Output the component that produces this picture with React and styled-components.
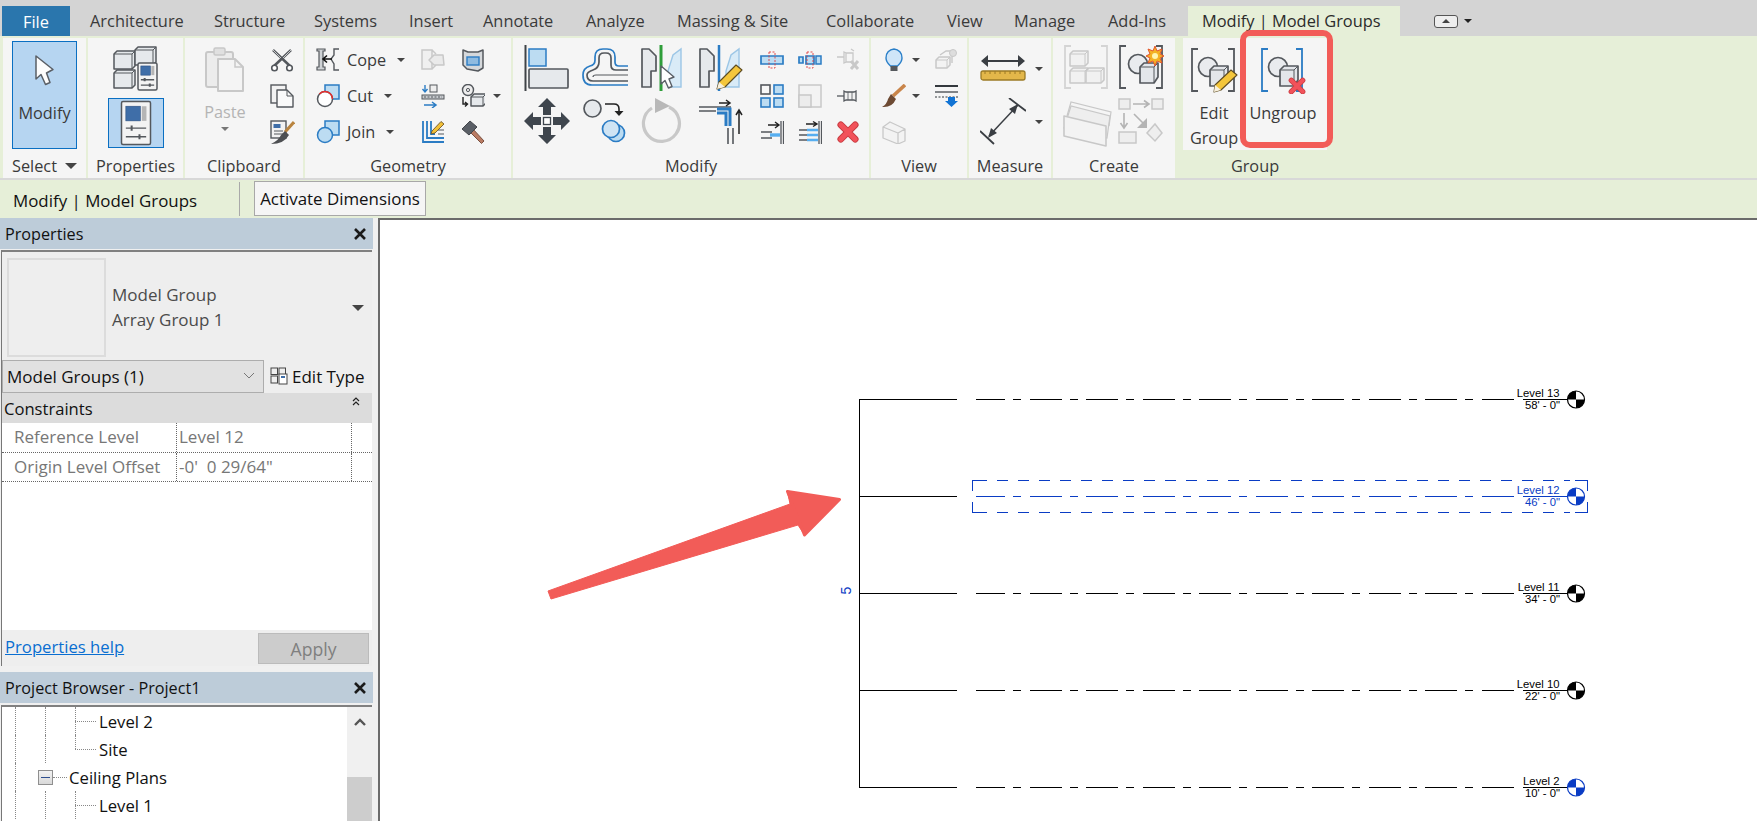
import React from 'react';
import styled, { createGlobalStyle } from 'styled-components';

const GlobalStyle = createGlobalStyle`
  html, body { margin: 0; padding: 0; background: #fff; overflow: hidden; }
  body { font-family: "Open Sans", "Noto Sans", "Liberation Sans", sans-serif; }
`;

const DARK = '#54585d';
const FILL = '#e6e9ec';
const BLUE = '#2b7cc4';
const SKY = '#bcdcf2';
const GRAY = '#c8c8c8';
const RED = '#f25c58';
const CAD = '#0a3cc4';

const Root = styled.div`
  position: relative;
  width: 1757px;
  height: 821px;
  overflow: hidden;
  font-size: 16.3px;
  color: #3a3a3a;
`;

/* tabs */
const TabBar = styled.div`
  display: flex;
  align-items: flex-end;
  height: 36px;
  padding-left: 2px;
  background: #d4d4d4;
`;
const FileTab = styled.div`
  width: 68px;
  height: 30px;
  background: #2a76ad;
  color: #fff;
  display: flex;
  align-items: center;
  justify-content: center;
  font-size: 16.4px;
`;
const Tab = styled.div`
  width: ${p => p.$w}px;
  height: 30px;
  padding-left: 20px;
  box-sizing: border-box;
  line-height: 30px;
  white-space: nowrap;
  font-size: 16.4px;
`;
const ContextTab = styled(Tab)`
  padding-left: 14px;
  background: #e6efd8;
  color: #2b2b2b;
`;
const ToggleBox = styled.div`
  display: flex;
  align-items: center;
  gap: 6px;
  height: 30px;
  margin-left: 34px;
`;
const ToggleIcon = styled.div`
  width: 22px;
  height: 11px;
  border: 1.5px solid #555;
  border-radius: 3px;
  background: #eee;
  display: flex;
  align-items: center;
  justify-content: center;
`;

/* ribbon */
const Caret = styled.span`
  display: inline-block;
  width: 0;
  height: 0;
  border-left: ${p => p.$s || 4}px solid transparent;
  border-right: ${p => p.$s || 4}px solid transparent;
  border-top: ${p => p.$s || 4}px solid ${p => p.$color || '#444'};
  margin-left: ${p => p.$ml ?? 0}px;
  margin-right: ${p => p.$mr ?? 0}px;
  flex: none;
`;
const UpCaret = styled(Caret)`
  transform: rotate(180deg);
`;
const Ribbon = styled.div`
  display: flex;
  gap: 2px;
  height: 144px;
  padding: 2px 0 0 3px;
  box-sizing: border-box;
  background: #e6efd8;
  position: relative;
  border-bottom: 2px solid #d8d8d8;
`;
const Panel = styled.div`
  width: ${p => p.$w}px;
  margin-left: ${p => p.$ml || 0}px;
  height: 140px;
  background: ${p => (p.$context ? 'transparent' : '#f5f5f5')};
  display: flex;
  flex-direction: column;
`;
const PanelBody = styled.div`
  height: 112px;
  box-sizing: border-box;
  display: flex;
  align-items: flex-start;
  padding: ${p => p.$pad || '0 0 0 11px'};
  background: ${p => (p.$light ? '#f5f5f5' : 'transparent')};
`;
const PanelLabel = styled.div`
  height: 28px;
  padding-top: 4px;
  box-sizing: border-box;
  line-height: 28px;
  text-align: center;
  white-space: nowrap;
  display: flex;
  justify-content: center;
  align-items: center;
  gap: 8px;
`;
const ModifyButton = styled.div`
  width: 65px;
  height: 108px;
  box-sizing: border-box;
  background: #b6d5f1;
  border: 1.5px solid #0a6fc2;
  display: flex;
  flex-direction: column;
  align-items: center;
  padding-top: 13px;
  margin-top: 3px;
`;
const ButtonText = styled.div`
  margin-top: 17px;
  line-height: 20px;
`;
const CenterColumn = styled.div`
  display: flex;
  flex-direction: column;
  align-items: center;
  width: 100%;
  padding-top: 8px;
`;
const ToggleButton = styled.div`
  width: 56px;
  height: 50px;
  margin-top: 7px;
  box-sizing: border-box;
  background: #b6d5f1;
  border: 1px solid #0a6fc2;
  display: flex;
  align-items: center;
  justify-content: center;
`;
const PasteTool = styled.div`
  width: 80px;
  display: flex;
  flex-direction: column;
  align-items: center;
  padding-top: 9px;
  color: #b4b4b4;
`;
const PasteText = styled.div`
  margin-top: 7px;
  margin-bottom: 3px;
  line-height: 24px;
`;
const SmallCol = styled.div`
  display: flex;
  flex-direction: column;
  gap: 12px;
  padding-top: 10px;
  margin-left: ${p => p.$ml || 0}px;
  width: ${p => (p.$w ? `${p.$w}px` : 'auto')};
`;
const IconRow = styled.div`
  display: flex;
  align-items: center;
  height: 24px;
`;
const RowText = styled.span`
  margin-left: 7px;
  line-height: 24px;
`;
const SmallGrid = styled.div`
  display: grid;
  grid-template-columns: repeat(3, 24px);
  grid-auto-rows: 24px;
  column-gap: 14px;
  row-gap: 12px;
  padding-top: 10px;
  margin-left: ${p => p.$ml || 0}px;
`;
const BigGrid = styled.div`
  display: grid;
  grid-template-columns: repeat(${p => p.$cols}, ${p => p.$size}px);
  grid-auto-rows: 47px;
  column-gap: ${p => p.$gap}px;
  row-gap: 6px;
  padding-top: 7px;
`;
const MeasureCol = styled.div`
  display: flex;
  flex-direction: column;
  gap: 6px;
  padding-top: 7px;
`;
const MeasureRow = styled.div`
  display: flex;
  align-items: center;
  height: 47px;
`;
const GroupTool = styled.div`
  width: ${p => p.$w}px;
  margin-left: ${p => p.$ml || 0}px;
  display: flex;
  flex-direction: column;
  align-items: center;
  text-align: center;
  padding-top: 10px;
`;
const GroupText = styled.div`
  margin-top: 7px;
  line-height: 25px;
`;
const Highlight = styled.div`
  position: absolute;
  left: 1240px;
  top: 30px;
  width: 93px;
  height: 118px;
  box-sizing: border-box;
  border: 6px solid ${RED};
  border-radius: 10px;
`;

/* options bar */
const OptionsBar = styled.div`
  display: flex;
  align-items: center;
  height: 38px;
  background: #e6efd8;
  color: #111;
  font-size: 16.9px;
`;
const OptionsTitle = styled.div`
  width: 240px;
  padding-left: 13px;
  box-sizing: border-box;
  border-right: 1px solid #a9a9a9;
  height: 34px;
  line-height: 38px;
  white-space: nowrap;
`;
const OptionsButton = styled.div`
  height: 35px;
  width: 172px;
  margin-left: 14px;
  margin-top: -1px;
  box-sizing: border-box;
  background: #f5f5f5;
  border: 1px solid #a8a8a8;
  text-align: center;
  line-height: 33px;
  white-space: nowrap;
`;

/* main area */
const Main = styled.div`
  display: flex;
  height: 603px;
`;
const LeftColumn = styled.div`
  width: 373px;
  flex: none;
  display: flex;
  flex-direction: column;
  background: #f0f0f0;
  color: #111;
  font-size: 17px;
`;
const Gutter = styled.div`
  width: 5px;
  flex: none;
  background: #f0f0f0;
`;
const PaneHeader = styled.div`
  height: 31px;
  flex: none;
  background: #bdccd9;
  display: flex;
  align-items: center;
  justify-content: space-between;
  padding: 0 6px 0 5px;
  font-size: 16.2px;
`;
const PropsBody = styled.div`
  height: 416px;
  margin: 1px 1px 0 1px;
  flex: none;
  box-sizing: border-box;
  border-left: 1px solid #777;
  border-top: 2px solid #808080;
  background: #fff;
  display: flex;
  flex-direction: column;
`;
const TypeSelector = styled.div`
  height: 107px;
  flex: none;
  box-sizing: border-box;
  background: #eee;
  padding: 6px 5px 2px 5px;
  display: flex;
  align-items: center;
  color: #4b4b4b;
`;
const Thumb = styled.div`
  width: 99px;
  height: 99px;
  box-sizing: border-box;
  border: 2px solid #dcdcdc;
  flex: none;
`;
const TypeName = styled.div`
  margin-left: 6px;
  flex: 1;
  line-height: 24.5px;
`;
const SelectRow = styled.div`
  display: flex;
  align-items: center;
  height: 34px;
  flex: none;
  background: #eee;
`;
const FakeSelect = styled.div`
  width: 262px;
  height: 33px;
  box-sizing: border-box;
  background: #e1e1e1;
  border: 1px solid #adadad;
  display: flex;
  align-items: center;
  justify-content: space-between;
  padding: 0 8px 0 4px;
`;
const EditType = styled.div`
  display: flex;
  align-items: center;
  gap: 4px;
  margin-left: 6px;
  white-space: nowrap;
`;
const SectionHead = styled.div`
  height: 30px;
  flex: none;
  background: #dcdcdc;
  display: flex;
  justify-content: space-between;
  padding: 0 12px 0 2px;
  line-height: 32px;
  font-size: 16.6px;
`;
const PropRow = styled.div`
  height: 29.5px;
  flex: none;
  box-sizing: border-box;
  display: grid;
  grid-template-columns: 175px 175px 1fr;
  border-bottom: 1px dotted #666;
  color: #777;
  line-height: 28px;
`;
const PropCell = styled.div`
  padding-left: ${p => p.$pl}px;
  border-right: 1px dotted #666;
  white-space: pre;
`;
const PropsFill = styled.div`
  flex: 1;
`;
const PropsFooter = styled.div`
  height: 36px;
  flex: none;
  background: #eee;
  display: flex;
  align-items: center;
  justify-content: space-between;
  padding: 0 3px 0 3px;
`;
const HelpLink = styled.a`
  color: #0a6ed1;
  text-decoration: underline;
  font-size: 16.7px;
  margin-top: -3px;
`;
const ApplyButton = styled.div`
  width: 111px;
  height: 31px;
  box-sizing: border-box;
  background: #cccccc;
  border: 1px solid #bbb;
  color: #7f7f7f;
  text-align: center;
  line-height: 31px;
  font-size: 17.6px;
`;
const Spacer = styled.div`
  height: 6px;
  flex: none;
`;
const BrowserBody = styled.div`
  flex: 1;
  margin: 2px 1px 0 1px;
  border-left: 1px solid #777;
  border-top: 2px solid #808080;
  background: #fff;
  display: flex;
  overflow: hidden;
`;
const TreeList = styled.div`
  flex: 1;
  padding-left: 13px;
  font-size: 16.7px;
`;
const TreeRow = styled.div`
  display: flex;
  height: 28px;
  align-items: center;
`;
const Guide = styled.span`
  align-self: stretch;
  width: 30px;
  flex: none;
  box-sizing: border-box;
  border-left: 1px dotted #888;
`;
const Branch = styled.span`
  align-self: stretch;
  width: 21px;
  flex: none;
  position: relative;
  margin-right: 3px;
  &::before {
    content: '';
    position: absolute;
    left: 0;
    top: 0;
    height: ${p => (p.$last ? '50%' : '100%')};
    border-left: 1px dotted #888;
  }
  &::after {
    content: '';
    position: absolute;
    left: 0;
    right: 0;
    top: 50%;
    border-top: 1px dotted #888;
  }
`;
const Expander = styled.span`
  width: 15px;
  height: 15px;
  box-sizing: border-box;
  flex: none;
  margin-left: -7px;
  position: relative;
  background: linear-gradient(#f2f2f2, #d9d9d9);
  border: 1px solid #8f8f8f;
  display: flex;
  align-items: center;
  justify-content: center;
  &::after {
    content: '';
    width: 9px;
    border-top: 1px solid #2f4f8f;
  }
  &::before {
    content: '';
    position: absolute;
    left: 6px;
    top: -7px;
    bottom: -7px;
    z-index: -1;
    border-left: 1px dotted #888;
  }
`;
const Dash = styled.span`
  width: 14px;
  border-top: 1px dotted #888;
  margin-right: 2px;
`;
const ScrollBar = styled.div`
  width: 25px;
  flex: none;
  background: #f0f0f0;
  display: flex;
  flex-direction: column;
  align-items: center;
`;
const ScrollUp = styled.div`
  height: 70px;
  padding-top: 10px;
  box-sizing: border-box;
`;
const ScrollThumb = styled.div`
  flex: 1;
  width: 100%;
  background: #cdcdcd;
`;
const Canvas = styled.div`
  flex: 1;
  box-sizing: border-box;
  background: #fff;
  border-top: 2px solid #6b6b6b;
  border-left: 2px solid #6b6b6b;
  overflow: hidden;
`;

/* icons */
const Ic = ({ w = 24, h = 24, children }) => (
  <svg width={w} height={h} viewBox={`0 0 ${w} ${h}`} fill="none" style={{ display: 'block', flex: 'none' }}>
    {children}
  </svg>
);

const RedX = ({ x, y, s = 1 }) => (
  <>
    <path
      d={`M${x - 6 * s} ${y - 6 * s} L${x + 6 * s} ${y + 6 * s} M${x + 6 * s} ${y - 6 * s} L${x - 6 * s} ${y + 6 * s}`}
      stroke="#c73b40"
      strokeWidth={5.6 * s}
      strokeLinecap="round"
    />
    <path
      d={`M${x - 6 * s} ${y - 6 * s} L${x + 6 * s} ${y + 6 * s} M${x + 6 * s} ${y - 6 * s} L${x - 6 * s} ${y + 6 * s}`}
      stroke="#f2525a"
      strokeWidth={4 * s}
      strokeLinecap="round"
    />
  </>
);
const Cube = ({ x, y, s = 16, c = DARK, f = FILL }) => (
  <g>
    <path d={`M${x + 3} ${y} H${x + s + 3} V${y + s - 3} L${x + s} ${y + s} H${x} V${y + 3} Z`} fill={f} stroke={c} strokeWidth="1.5" strokeLinejoin="round" />
    <path d={`M${x} ${y + 3} H${x + s} V${y + s} M${x + s} ${y + 3} L${x + s + 3} ${y}`} stroke={c} strokeWidth="1" />
  </g>
);
const Sheet = ({ x, y, w, h }) => (
  <g>
    <rect x={x} y={y} width={w} height={h} rx="1.5" fill="#f3f3f3" stroke={DARK} strokeWidth="1.5" />
    <rect x={x + w * 0.15} y={y + h * 0.11} width={w * 0.5} height={h * 0.34} fill="#3f6ea8" stroke="#2b4f80" strokeWidth=".6" />
    <rect x={x + w * 0.7} y={y + h * 0.11} width={w * 0.16} height={h * 0.34} fill="#b5b5b5" />
    <path d={`M${x + w * 0.15} ${y + h * 0.62} H${x + w * 0.85} M${x + w * 0.15} ${y + h * 0.82} H${x + w * 0.85}`} stroke={DARK} strokeWidth="1.3" />
    <path d={`M${x + w * 0.35} ${y + h * 0.56} V${y + h * 0.68} M${x + w * 0.62} ${y + h * 0.76} V${y + h * 0.88}`} stroke={DARK} strokeWidth="2" />
  </g>
);

const CursorIcon = () => (
  <Ic w={19} h={31}>
    <path d="M1 1 V24 L6 19.5 L10.5 29.5 L15 27.5 L11.5 18 L18 14.5 Z" fill="#fdfdfd" stroke="#5a5f66" strokeWidth="1.5" strokeLinejoin="round" />
  </Ic>
);
const TypeProps = () => (
  <Ic w={46} h={45}>
    <Cube x={1} y={5} s={18} />
    <Cube x={22} y={1} s={18} />
    <Cube x={1} y={24} s={18} />
    <Sheet x={25} y={17} w={19} h={27} />
  </Ic>
);
const SheetIcon = () => (
  <Ic w={32} h={46}>
    <Sheet x={1.5} y={1.5} w={29} h={43} />
  </Ic>
);
const PasteIcon = () => (
  <Ic w={40} h={46}>
    <rect x="1" y="5" width="27" height="35" rx="2" fill="#ececec" stroke={GRAY} strokeWidth="2" />
    <rect x="9" y="1" width="11" height="7" rx="1.5" fill="#e0e0e0" stroke={GRAY} strokeWidth="1.5" />
    <path d="M13 12 H30 L38 20 V44 H13 Z" fill="#f4f4f4" stroke={GRAY} strokeWidth="2" strokeLinejoin="round" />
    <path d="M30 12 V20 H38" stroke={GRAY} strokeWidth="1.5" />
  </Ic>
);
const Scissors = () => (
  <Ic>
    <path d="M3 2 L20 18 M21 2 L4 18" stroke={DARK} strokeWidth="2.5" />
    <path d="M3 2 L11 10 M21 2 L13 10" stroke="#e8e8e8" strokeWidth=".8" />
    <circle cx="4.5" cy="20" r="2.8" fill="#fff" stroke={DARK} strokeWidth="1.6" />
    <circle cx="19.5" cy="20" r="2.8" fill="#fff" stroke={DARK} strokeWidth="1.6" />
  </Ic>
);
const CopyPages = () => (
  <Ic>
    <rect x="1" y="1" width="15" height="18" fill="#f2f2f2" stroke={DARK} strokeWidth="1.4" />
    <path d="M7 6 H17 L23 12 V23 H7 Z" fill="#fafafa" stroke={DARK} strokeWidth="1.4" strokeLinejoin="round" />
    <path d="M17 6 V12 H23" stroke={DARK} />
  </Ic>
);
const MatchProps = () => (
  <Ic w={25} h={25}>
    <rect x="1" y="1" width="15" height="17" fill="#f2f2f2" stroke={DARK} strokeWidth="1.4" />
    <rect x="3.5" y="4" width="7" height="4" fill="#3f6ea8" />
    <path d="M4 11 H13 M4 14 H13" stroke={DARK} />
    <path d="M24 2 L15 12" stroke="#b9843f" strokeWidth="3" />
    <path d="M15 11 L19 15 Q14 24 1 24 Q9 20 11 15 Z" fill="#4d4f52" />
  </Ic>
);
const CopeIcon = () => (
  <Ic>
    <path d="M1 1 H9 V3 H7 V19 H9 V22 H1 V19 H3 V3 H1 Z" fill="#cfd2d5" stroke={DARK} strokeWidth="1.2" />
    <path d="M23 1 H18 V7 L15 11 L18 16 V22 H23" stroke={DARK} strokeWidth="1.4" />
    <path d="M16 11 H7 M11 7.5 L7 11 L11 14.5" stroke="#111" strokeWidth="1.6" />
  </Ic>
);
const CutIcon = () => (
  <Ic>
    <rect x="9" y="1" width="14" height="14" fill={SKY} stroke={BLUE} strokeWidth="1.5" />
    <circle cx="9" cy="15" r="7.5" fill="#fff" stroke={DARK} strokeWidth="1.5" />
    <path d="M3.5 10 A7.5 7.5 0 0 1 16.5 15" stroke="#ef2b2b" strokeWidth="1.4" />
  </Ic>
);
const JoinIcon = () => (
  <Ic>
    <rect x="9" y="1" width="14" height="14" fill={SKY} stroke={BLUE} strokeWidth="1.5" />
    <circle cx="9" cy="15" r="7.5" fill={SKY} stroke={BLUE} strokeWidth="1.5" />
  </Ic>
);
const UnjoinIcon = () => (
  <Ic>
    <path d="M1 2 H11 V21 H1 Z M11 2 L15 6 M11 21 L15 17" fill="#f0f0f0" stroke={GRAY} strokeWidth="1.5" />
    <path d="M22 7 H13 L8 12 L13 17 H23 Z" fill="#eaeaea" stroke={GRAY} strokeWidth="1.5" strokeLinejoin="round" />
  </Ic>
);
const WallShield = () => (
  <Ic>
    <path d="M2 2 L7 4 L17 4 L22 2 V20 L17 23 L6 21 L2 17 Z" fill="#d5d8db" stroke={DARK} strokeWidth="1.5" strokeLinejoin="round" />
    <rect x="6" y="9" width="12" height="8" fill="#8fbbe0" stroke={BLUE} strokeWidth="1.4" />
  </Ic>
);
const SplitIcon = () => (
  <Ic>
    <path d="M4 1 V7 M1.5 5 L4 8 L6.5 5" stroke={BLUE} strokeWidth="1.4" />
    <rect x="9" y="1" width="7" height="7" fill="#eee" stroke={DARK} />
    <rect x="1" y="11" width="22" height="4" fill="#c9ccd0" stroke={DARK} />
    <path d="M3 13 H21" stroke={DARK} strokeDasharray="2 1.5" />
    <path d="M3 21 H14 M11 18 L15 21 L11 24" stroke={BLUE} strokeWidth="1.5" />
  </Ic>
);
const CircleCube = () => (
  <Ic>
    <circle cx="7" cy="6" r="5.5" fill="#eee" stroke={DARK} strokeWidth="1.4" />
    <circle cx="7" cy="6" r="1.6" stroke={DARK} />
    <path d="M2 13 V20 H6 M4 18 L6.5 20 L4 22.5" stroke="#222" strokeWidth="1.4" />
    <Cube x={10} y={10} s={12} />
  </Ic>
);
const WallPencil = () => (
  <Ic>
    <path d="M2 1 V22 H23 M6 1 V18 H23 M10 1 V14 H14" stroke={BLUE} strokeWidth="1.8" />
    <path d="M17 10 H23 M17 14 H23" stroke={DARK} strokeWidth="1.2" />
    <path d="M11 11 L20 1.5 L23 4 L14 13 L10 14 Z" fill="#f2c037" stroke="#70582a" strokeWidth=".9" />
  </Ic>
);
const Hammer = () => (
  <Ic>
    <path d="M11 8 L23 21 L20.5 23.5 L8 11" fill="#b97b63" stroke="#7a5040" />
    <path d="M1 9 L9 1 L16 7 L8 15 Z" fill="#5a5f66" stroke="#43464b" strokeLinejoin="round" />
  </Ic>
);

const AlignIcon = () => (
  <Ic w={46} h={47}>
    <path d="M1.5 0 V46" stroke="#3f4347" strokeWidth="2" />
    <rect x="5" y="4" width="17" height="17" fill={SKY} stroke={BLUE} strokeWidth="1.5" />
    <rect x="5" y="24" width="39" height="19" rx="1" fill={FILL} stroke={DARK} strokeWidth="1.7" />
  </Ic>
);
const OffsetIcon = () => (
  <Ic w={46} h={47}>
    <path d="M46 21 H37 Q33 21 33 17 V12 Q33 4 25 4 H21 Q13 4 13 12 V15 Q13 20 8 21 Q1 23 1 30 Q1 40 10 40 H46" stroke={BLUE} strokeWidth="1.7" />
    <path d="M46 25 H34 Q29 25 29 20 V13 Q29 8 24 8 H22 Q17 8 17 13 V17 Q17 23 11 25 Q5 27 5 30 Q5 36 11 36 H46" stroke={DARK} strokeWidth="1.7" />
    <path d="M46 30 H14 Q11 30 11 32" stroke={DARK} strokeWidth="1.2" />
  </Ic>
);
const DoorPair = ({ line, lineW = 2.5 }) => (
  <>
    <path d="M2 4 H9 L16 11 V26 H11 V42 H2 Z" fill={FILL} stroke={DARK} strokeWidth="1.7" strokeLinejoin="round" />
    <path d="M41 4 V42 H28 V26 L33 10 Z" fill="#d9ebf7" stroke="#9cc6e6" strokeWidth="1.4" />
    <path d="M21 0 V46" stroke={line} strokeWidth={lineW} />
  </>
);
const MirrorPick = () => (
  <Ic w={46} h={47}>
    <DoorPair line="#2f9e3a" lineW={3} />
    <path d="M21 21 V39 L25 35.5 L28.5 43 L32 41.5 L29 34 L34 32 Z" fill="#fff" stroke="#5a5f66" strokeWidth="1.4" strokeLinejoin="round" />
  </Ic>
);
const MirrorDraw = () => (
  <Ic w={46} h={47}>
    <DoorPair line={BLUE} />
    <path d="M19 44 L21 37 L38 20 L44 25 L27 42 Z" fill="#f4c63b" stroke="#5d4b22" strokeWidth="1.1" strokeLinejoin="round" />
    <path d="M19 44 L21 37 L27 42 Z" fill="#f7f0de" />
  </Ic>
);
const MoveIcon = () => (
  <Ic w={46} h={47}>
    <path d="M23 0 L32 9 H27 V17 H19 V9 H14 Z M23 46 L32 37 H27 V29 H19 V37 H14 Z M0 23 L9 14 V19 H17 V27 H9 V32 Z M46 23 L37 14 V19 H29 V27 H37 V32 Z" fill="#3f464e" strokeLinejoin="round" />
    <rect x="19.5" y="19.5" width="7" height="7" fill="#fff" stroke="#3f464e" strokeWidth="1.3" />
  </Ic>
);
const CopyIcon = () => (
  <Ic w={46} h={47}>
    <circle cx="10.5" cy="10.5" r="8.5" fill={FILL} stroke={DARK} strokeWidth="1.7" />
    <path d="M23 6 H32 Q37 6 37 11 V15" stroke="#222" strokeWidth="1.6" />
    <path d="M32.5 13 H41.5 L37 18 Z" fill="#222" />
    <circle cx="34" cy="35" r="8.5" fill={SKY} stroke={BLUE} strokeWidth="1.7" />
    <circle cx="29" cy="31" r="8.5" fill="#cfe4f4" stroke={BLUE} strokeWidth="1.7" />
  </Ic>
);
const RotateIcon = () => (
  <Ic w={42} h={47}>
    <path d="M12 10 A18 18 0 1 0 29 9" stroke={GRAY} strokeWidth="3.2" />
    <path d="M15 0 L30 8 L15 15 Z" fill="#b8b8b8" />
  </Ic>
);
const TrimIcon = () => (
  <Ic w={46} h={47}>
    <path d="M1 9 H33 M1 13 H18" stroke={DARK} strokeWidth="1.6" />
    <path d="M21 5 H31 M28 2 L32 5 L28 8" stroke="#222" strokeWidth="1.5" />
    <path d="M19 11 H32 V28 M19 15 H28 V28" stroke={BLUE} strokeWidth="3" />
    <path d="M30 30 V46 M35 30 V46" stroke={DARK} strokeWidth="1.6" />
    <path d="M41 36 V12 M38 17 L41 12 L44 17" stroke="#222" strokeWidth="1.5" />
  </Ic>
);
const SplitBlue = ({ dual }) => (
  <Ic>
    {dual ? (
      <path d="M8 8 H16 V16 H8 Z M1 9 H5 V15 H1 Z" fill={SKY} stroke={BLUE} strokeWidth="1.7" />
    ) : (
      <path d="M1 8 H23 V16 H1 Z" fill={SKY} stroke={BLUE} strokeWidth="1.7" />
    )}
    {dual && <rect x="18" y="8" width="5" height="8" fill={SKY} stroke={BLUE} strokeWidth="1.5" />}
    <rect x="9" y="4" width="6" height="16" stroke="#e23a3a" strokeWidth=".9" strokeDasharray="2 1.5" />
  </Ic>
);
const UnpinX = () => (
  <Ic>
    <path d="M1 9 H8 M8 4 L10 5 V14 L8 15 Z M10 5 H17 V14 H10 M15 1 L18 3" stroke={GRAY} strokeWidth="1.3" />
    <path d="M15 13 L22 21 M22 13 L15 21" stroke={GRAY} strokeWidth="3" />
  </Ic>
);
const ArrayIcon = () => (
  <Ic>
    {[[1, 1], [14, 1], [1, 14], [14, 14]].map(([x, y], i) => (
      <rect key={i} x={x} y={y} width="9" height="9" fill={i === 0 ? '#f7f7f7' : SKY} stroke={i === 0 ? DARK : BLUE} strokeWidth="1.6" />
    ))}
  </Ic>
);
const ScaleIcon = () => (
  <Ic>
    <rect x="1" y="1" width="22" height="22" fill="#f3f3f3" stroke={GRAY} strokeWidth="1.5" />
    <rect x="1" y="11" width="12" height="12" fill="#ececec" stroke={GRAY} strokeWidth="1.5" />
  </Ic>
);
const PinIcon = () => (
  <Ic>
    <path d="M1 12 H8" stroke={DARK} strokeWidth="1.3" />
    <path d="M8 7 L10 8 H18 L20 7 V17 L18 16 H10 L8 17 Z" fill="#f2f2f2" stroke={DARK} strokeWidth="1.3" />
    <path d="M12 8 V16 M16 8 V16" stroke={DARK} strokeWidth=".8" />
  </Ic>
);
const TrimSingle = () => (
  <Ic>
    <path d="M21 1 V24 M23.5 1 V24" stroke={DARK} strokeWidth="1.3" />
    <path d="M8 5 H18 M15 2 L19 5 L15 8" stroke="#222" strokeWidth="1.4" />
    <path d="M1 12 H12 M1 18 H12" stroke={DARK} strokeWidth="1.6" />
    <path d="M10 15 H20" stroke="#56aef0" strokeWidth="3.4" />
  </Ic>
);
const TrimMulti = () => (
  <Ic>
    <path d="M21 1 V24 M23.5 1 V24" stroke={DARK} strokeWidth="1.3" />
    <path d="M8 4 H18 M15 1.5 L19 4 L15 6.5" stroke="#222" strokeWidth="1.4" />
    <path d="M1 10 H9 M1 15 H9 M1 20 H9" stroke={DARK} strokeWidth="1.6" />
    <path d="M9 10 H20 M9 15 H20 M9 20 H20" stroke="#56aef0" strokeWidth="2.6" />
  </Ic>
);
const DeleteIcon = () => (
  <Ic>
    <RedX x={12} y={12} s={1.2} />
  </Ic>
);
const Bulb = () => (
  <Ic>
    <path d="M12 1 A8.5 8.5 0 0 1 20 10 Q20 14 15.5 18 H8.5 Q4 14 4 10 A8.5 8.5 0 0 1 12 1 Z" fill="#cfe5f8" stroke="#2a7fc8" strokeWidth="1.4" />
    <rect x="8.5" y="18" width="7" height="5" fill="#55585c" />
  </Ic>
);
const DisplacedGray = () => (
  <Ic>
    <Cube x={2} y={9} s={11} c={GRAY} f="#f3f3f3" />
    <path d="M6 7 L12 3 H18 V15" stroke={GRAY} strokeWidth="1.4" />
    <circle cx="19" cy="5" r="3.5" fill="#ddd" stroke={GRAY} />
  </Ic>
);
const Brush = () => (
  <Ic>
    <path d="M23 1 L11 12" stroke="#c9854a" strokeWidth="3.6" />
    <path d="M9 10 L14 15 Q10 24 0 23 Q5 20 6 15 Z" fill="#6d4a33" />
  </Ic>
);
const Thinlines = () => (
  <Ic>
    <path d="M1 2 H24" stroke="#33383d" strokeWidth="2" />
    <path d="M1 8 H24" stroke="#33383d" strokeWidth="1.2" />
    <path d="M1 13 H24" stroke="#33383d" strokeWidth="1" strokeDasharray="2 1.5" />
    <path d="M14 13 H21 V17 H24 L17.5 23 L11 17 H14 Z" fill="#1173d4" />
  </Ic>
);
const WireGray = () => (
  <Ic>
    <path d="M1 7 L8 2 L23 9 V21 L16 24 L1 18 Z M1 7 L16 13 V24 M16 13 L23 9" fill="#f3f3f3" stroke={GRAY} strokeWidth="1.3" strokeLinejoin="round" />
  </Ic>
);
const MeasureIcon = () => (
  <Ic w={46} h={47}>
    <path d="M4 16 H42" stroke="#3a3e43" strokeWidth="1.8" />
    <path d="M1 16 L8 10 V22 Z M45 16 L38 10 V22 Z" fill="#3a3e43" />
    <rect x="1" y="26" width="44" height="9" rx="2" fill="#e3b74a" stroke="#9c7b26" strokeWidth="1.3" />
    <path d="M5 26 V29 M10 26 V29 M15 26 V29 M20 26 V29 M25 26 V29 M30 26 V29 M35 26 V29 M40 26 V29" stroke="#9c7b26" />
  </Ic>
);
const DimIcon = () => (
  <Ic w={46} h={47}>
    <path d="M29 0 L46 13 M0 33 L14 46" stroke="#3a3e43" strokeWidth="1.8" />
    <path d="M9 38 L38 7" stroke="#3a3e43" strokeWidth="1.5" />
    <path d="M38 6 L35 16 L29 11 Z M8 40 L11 30 L17 35 Z" fill="#3a3e43" />
  </Ic>
);
const Brackets = ({ c, w = 46, h = 45 }) => (
  <path d={`M8 1 H2 V${h - 2} H8 M${w - 8} 1 H${w - 2} V${h - 2} H${w - 8}`} stroke={c} strokeWidth="1.8" />
);
const GrayCubes = () => (
  <Ic w={46} h={47}>
    <Brackets c="#d4d4d4" />
    <Cube x={7} y={6} s={15} c={GRAY} f="#f1f1f1" />
    <Cube x={7} y={23} s={15} c={GRAY} f="#f1f1f1" />
    <Cube x={23} y={23} s={15} c={GRAY} f="#f1f1f1" />
  </Ic>
);
const Shapes = ({ c = DARK }) => (
  <>
    <circle cx="17" cy="17" r="9.5" fill="#e9ebee" stroke={c} strokeWidth="1.7" />
    <path d="M19 20 L23 16 H37 V30 L33 36 H19 Z" fill="#e3e6ea" stroke={c} strokeWidth="1.7" strokeLinejoin="round" />
    <path d="M19 20 H33 V36 M33 20 L37 16" stroke={c} strokeWidth="1" />
  </>
);
const NewGroup = () => (
  <Ic w={46} h={47}>
    <Brackets c={DARK} />
    <g transform="translate(3 2)"><Shapes /></g>
    <path d="M37 1 L39 6 L44 4 L42 9 L46 11 L42 13 L44 18 L39 16 L37 21 L35 16 L30 18 L32 13 L28 11 L32 9 L30 4 L35 6 Z" fill="#f4b223" stroke="#e2562c" />
    <circle cx="37" cy="11" r="3" fill="#fff6b0" />
  </Ic>
);
const Stack = () => (
  <Ic w={50} h={49}>
    <path d="M1 30 L8 8 L47 18 L44 40 Z" fill="#eee" stroke={GRAY} strokeWidth="1.2" />
    <path d="M4 18 L8 4 L48 14 L46 28" stroke={GRAY} strokeWidth="1.2" />
    <path d="M1 18 L43 28 V48 L1 38 Z" fill="#f3f3f3" stroke={GRAY} strokeWidth="1.6" strokeLinejoin="round" />
  </Ic>
);
const Flow = () => (
  <Ic w={46} h={47}>
    <rect x="1" y="1" width="11" height="10" fill="#eee" stroke={GRAY} strokeWidth="1.5" />
    <rect x="34" y="1" width="11" height="10" fill="#eee" stroke={GRAY} strokeWidth="1.5" />
    <rect x="1" y="34" width="17" height="11" fill="#eee" stroke={GRAY} strokeWidth="1.5" />
    <path d="M37 26 L44 35 L37 43 L29 35 Z" fill="#eee" stroke={GRAY} strokeWidth="1.5" />
    <path d="M15 6 H30 M26 2.5 L31 6 L26 9.5 M6 15 V29 M2.5 25 L6 30 L9.5 25 M16 16 L28 28" stroke="#b4b4b4" strokeWidth="1.6" />
    <path d="M29 20 V30 H19 Z" fill="#b4b4b4" />
  </Ic>
);
const EditGroupIcon = () => (
  <Ic w={48} h={46}>
    <Brackets c={DARK} w={46} />
    <g transform="translate(1 2)"><Shapes /></g>
    <path d="M24 44 L25 37 L41 22 L47 27 L31 42 Z" fill="#f4c63b" stroke="#5d4b22" strokeWidth="1.1" strokeLinejoin="round" />
    <path d="M24 44 L25 37 L31 42 Z" fill="#f7f0de" />
  </Ic>
);
const UngroupIcon = () => (
  <Ic w={46} h={46}>
    <Brackets c={BLUE} w={44} />
    <g transform="translate(1 2)"><Shapes /></g>
    <RedX x={37} y={38} s={0.95} />
  </Ic>
);
const CloseX = () => (
  <Ic w={14} h={14}>
    <path d="M2 2 L12 12 M12 2 L2 12" stroke="#1a1a1a" strokeWidth="2.6" />
  </Ic>
);
const EditTypeIcon = () => (
  <Ic w={18} h={18}>
    <rect x="1" y="1" width="6.5" height="6.5" stroke="#444" />
    <rect x="9" y="1" width="6.5" height="6.5" stroke="#444" />
    <rect x="1" y="9" width="6.5" height="7" stroke="#444" />
    <rect x="9" y="7" width="8" height="10" fill="#fff" stroke="#444" />
    <rect x="11" y="9" width="4" height="2" fill="#3f6ea8" />
  </Ic>
);

/* canvas drawing, in page coordinates */
const LEVELS = [
  { y: 399, name: 'Level 13', elev: `58' - 0"` },
  { y: 496, name: 'Level 12', elev: `46' - 0"`, selected: true },
  { y: 593, name: 'Level 11', elev: `34' - 0"` },
  { y: 690, name: 'Level 10', elev: `22' - 0"` },
  { y: 787, name: 'Level 2', elev: `10' - 0"`, blueHead: true },
];

const LevelLine = ({ y, name, elev, selected, blueHead }) => {
  const c = selected ? CAD : '#000';
  const hc = selected || blueHead ? CAD : '#000';
  const cx = 1576;
  const cy = y + 0.5;
  const r = 8.5;
  const quads = `M${cx} ${cy} V${cy - r} A${r} ${r} 0 0 0 ${cx - r} ${cy} Z M${cx} ${cy} V${cy + r} A${r} ${r} 0 0 0 ${cx + r} ${cy} Z`;
  return (
    <g>
      <line x1="859" y1={cy} x2="957" y2={cy} stroke="#000" shapeRendering="crispEdges" />
      <line x1="976" y1={cy} x2="1514" y2={cy} stroke={c} strokeDasharray="32 8 8 8.5" strokeDashoffset="3" shapeRendering="crispEdges" />
      <line x1="1523" y1={cy} x2="1567" y2={cy} stroke={c} shapeRendering="crispEdges" />
      <circle cx={cx} cy={cy} r={r} fill="#fff" stroke={hc} strokeWidth="1.2" />
      <path d={quads} fill={hc} />
      <text x="1559.5" y={y - 2} textAnchor="end" fontFamily="'Liberation Sans', sans-serif" fontSize="11.3" fill={c}>{name}</text>
      <text x="1560" y={y + 10} textAnchor="end" fontFamily="'Liberation Sans', sans-serif" fontSize="11.3" fill={c}>{elev}</text>
    </g>
  );
};

const Drawing = () => (
  <svg width="1377" height="601" viewBox="380 220 1377 601" style={{ display: 'block' }}>
    <line x1="859.5" y1="399" x2="859.5" y2="788" stroke="#000" shapeRendering="crispEdges" />
    {LEVELS.map(l => <LevelLine key={l.y} {...l} />)}
    <g stroke={CAD} fill="none" shapeRendering="crispEdges">
      <path d="M987 480.5 H972.5 V491 M972.5 502 V512.5 H987 M1575 480.5 H1587.5 V491 M1587.5 502 V512.5 H1575" />
      <line x1="997" y1="480.5" x2="1570" y2="480.5" strokeDasharray="11 10" />
      <line x1="997" y1="512.5" x2="1570" y2="512.5" strokeDasharray="11 10" />
    </g>
    <text transform="translate(851 590.5) rotate(-90)" textAnchor="middle" fontFamily="'Liberation Sans', sans-serif" fontSize="14" fill={CAD}>5</text>
    <path
      d="M548 591 L790 504 L787.5 491.5 L839.5 499.5 L804.5 535 L798 525 L551 599 Z"
      fill={RED}
      stroke={RED}
      strokeWidth="1"
      strokeLinejoin="round"
    />
    <path d="M787.5 491.5 L839.5 499.5 L804.5 535 Z" fill={RED} stroke={RED} strokeWidth="3" strokeLinejoin="round" />
  </svg>
);

const TABS = [
  ['Architecture', 124], ['Structure', 100], ['Systems', 95], ['Insert', 74], ['Annotate', 103],
  ['Analyze', 91], ['Massing & Site', 149], ['Collaborate', 121], ['View', 67], ['Manage', 94], ['Add-Ins', 100],
];

const App = () => (
  <Root>
    <GlobalStyle />
    <TabBar>
      <FileTab>File</FileTab>
      {TABS.map(([label, w]) => <Tab key={label} $w={w}>{label}</Tab>)}
      <ContextTab $w={212}>Modify | Model Groups</ContextTab>
      <ToggleBox>
        <ToggleIcon><UpCaret /></ToggleIcon>
        <Caret $color="#222" />
      </ToggleBox>
    </TabBar>

    <Ribbon>
      <Panel $w={83}>
        <PanelBody $pad="0 0 0 9px">
          <ModifyButton>
            <CursorIcon />
            <ButtonText>Modify</ButtonText>
          </ModifyButton>
        </PanelBody>
        <PanelLabel>Select <Caret $s={6} /></PanelLabel>
      </Panel>

      <Panel $w={95}>
        <PanelBody $pad="0">
          <CenterColumn>
            <TypeProps />
            <ToggleButton><SheetIcon /></ToggleButton>
          </CenterColumn>
        </PanelBody>
        <PanelLabel>Properties</PanelLabel>
      </Panel>

      <Panel $w={118}>
        <PanelBody $pad="0 0 0 0">
          <PasteTool>
            <PasteIcon />
            <PasteText>Paste</PasteText>
            <Caret $color="#777" />
          </PasteTool>
          <SmallCol $ml={5}>
            <Scissors />
            <CopyPages />
            <MatchProps />
          </SmallCol>
        </PanelBody>
        <PanelLabel>Clipboard</PanelLabel>
      </Panel>

      <Panel $w={206}>
        <PanelBody>
          <SmallCol $w={105}>
            <IconRow><CopeIcon /><RowText>Cope</RowText><Caret $ml={11} /></IconRow>
            <IconRow><CutIcon /><RowText>Cut</RowText><Caret $ml={11} /></IconRow>
            <IconRow><JoinIcon /><RowText>Join</RowText><Caret $ml={11} /></IconRow>
          </SmallCol>
          <SmallCol>
            <UnjoinIcon />
            <SplitIcon />
            <WallPencil />
          </SmallCol>
          <SmallCol $ml={16}>
            <WallShield />
            <IconRow><CircleCube /><Caret $ml={8} /></IconRow>
            <Hammer />
          </SmallCol>
        </PanelBody>
        <PanelLabel>Geometry</PanelLabel>
      </Panel>

      <Panel $w={356}>
        <PanelBody>
          <BigGrid $cols={4} $size={46} $gap={12}>
            <AlignIcon />
            <OffsetIcon />
            <MirrorPick />
            <MirrorDraw />
            <MoveIcon />
            <CopyIcon />
            <RotateIcon />
            <TrimIcon />
          </BigGrid>
          <SmallGrid $ml={16}>
            <SplitBlue />
            <SplitBlue dual />
            <UnpinX />
            <ArrayIcon />
            <ScaleIcon />
            <PinIcon />
            <TrimSingle />
            <TrimMulti />
            <DeleteIcon />
          </SmallGrid>
        </PanelBody>
        <PanelLabel>Modify</PanelLabel>
      </Panel>

      <Panel $w={96}>
        <PanelBody>
          <SmallCol $w={52}>
            <IconRow><Bulb /><Caret $ml={6} /></IconRow>
            <IconRow><Brush /><Caret $ml={6} /></IconRow>
            <WireGray />
          </SmallCol>
          <SmallCol>
            <DisplacedGray />
            <Thinlines />
          </SmallCol>
        </PanelBody>
        <PanelLabel>View</PanelLabel>
      </Panel>

      <Panel $w={82}>
        <PanelBody>
          <MeasureCol>
            <MeasureRow><MeasureIcon /><Caret $ml={9} /></MeasureRow>
            <MeasureRow><DimIcon /><Caret $ml={9} /></MeasureRow>
          </MeasureCol>
        </PanelBody>
        <PanelLabel>Measure</PanelLabel>
      </Panel>

      <Panel $w={122}>
        <PanelBody $pad="0 0 0 10px">
          <BigGrid $cols={2} $size={50} $gap={5}>
            <GrayCubes />
            <NewGroup />
            <Stack />
            <Flow />
          </BigGrid>
        </PanelBody>
        <PanelLabel>Create</PanelLabel>
      </Panel>

      <Panel $w={144} $ml={6} $context>
        <PanelBody $pad="0 0 0 6px" $light>
          <GroupTool $w={50}>
            <EditGroupIcon />
            <GroupText>Edit<br />Group</GroupText>
          </GroupTool>
          <GroupTool $w={72} $ml={8}>
            <UngroupIcon />
            <GroupText>Ungroup</GroupText>
          </GroupTool>
        </PanelBody>
        <PanelLabel>Group</PanelLabel>
      </Panel>
    </Ribbon>

    <OptionsBar>
      <OptionsTitle>Modify | Model Groups</OptionsTitle>
      <OptionsButton>Activate Dimensions</OptionsButton>
    </OptionsBar>

    <Main>
      <LeftColumn>
        <PaneHeader>Properties<CloseX /></PaneHeader>
        <PropsBody>
          <TypeSelector>
            <Thumb />
            <TypeName>Model Group<br />Array Group 1</TypeName>
            <Caret $s={6} $mr={3} />
          </TypeSelector>
          <SelectRow>
            <FakeSelect>
              Model Groups (1)
              <Ic w={12} h={8}><path d="M1 1 L6 6 L11 1" stroke="#777" /></Ic>
            </FakeSelect>
            <EditType><EditTypeIcon />Edit Type</EditType>
          </SelectRow>
          <SectionHead>
            Constraints
            <Ic w={8} h={14}><path d="M1 8 L4 5 L7 8 M1 12 L4 9 L7 12" stroke="#222" strokeWidth="1.2" /></Ic>
          </SectionHead>
          <PropRow>
            <PropCell $pl={12}>Reference Level</PropCell>
            <PropCell $pl={2}>Level 12</PropCell>
          </PropRow>
          <PropRow>
            <PropCell $pl={12}>Origin Level Offset</PropCell>
            <PropCell $pl={2}>{`-0'  0 29/64"`}</PropCell>
          </PropRow>
          <PropsFill />
          <PropsFooter>
            <HelpLink>Properties help</HelpLink>
            <ApplyButton>Apply</ApplyButton>
          </PropsFooter>
        </PropsBody>
        <Spacer />
        <PaneHeader>Project Browser - Project1<CloseX /></PaneHeader>
        <BrowserBody>
          <TreeList>
            <TreeRow><Guide /><Guide /><Branch />Level 2</TreeRow>
            <TreeRow><Guide /><Guide /><Branch $last />Site</TreeRow>
            <TreeRow><Guide /><Expander /><Dash />Ceiling Plans</TreeRow>
            <TreeRow><Guide /><Guide /><Branch />Level 1</TreeRow>
          </TreeList>
          <ScrollBar>
            <ScrollUp>
              <Ic w={14} h={10}><path d="M2 8 L7 3 L12 8" stroke="#555" strokeWidth="2.4" /></Ic>
            </ScrollUp>
            <ScrollThumb />
          </ScrollBar>
        </BrowserBody>
      </LeftColumn>
      <Gutter />
      <Canvas><Drawing /></Canvas>
    </Main>

    <Highlight />
  </Root>
);

export default App;
